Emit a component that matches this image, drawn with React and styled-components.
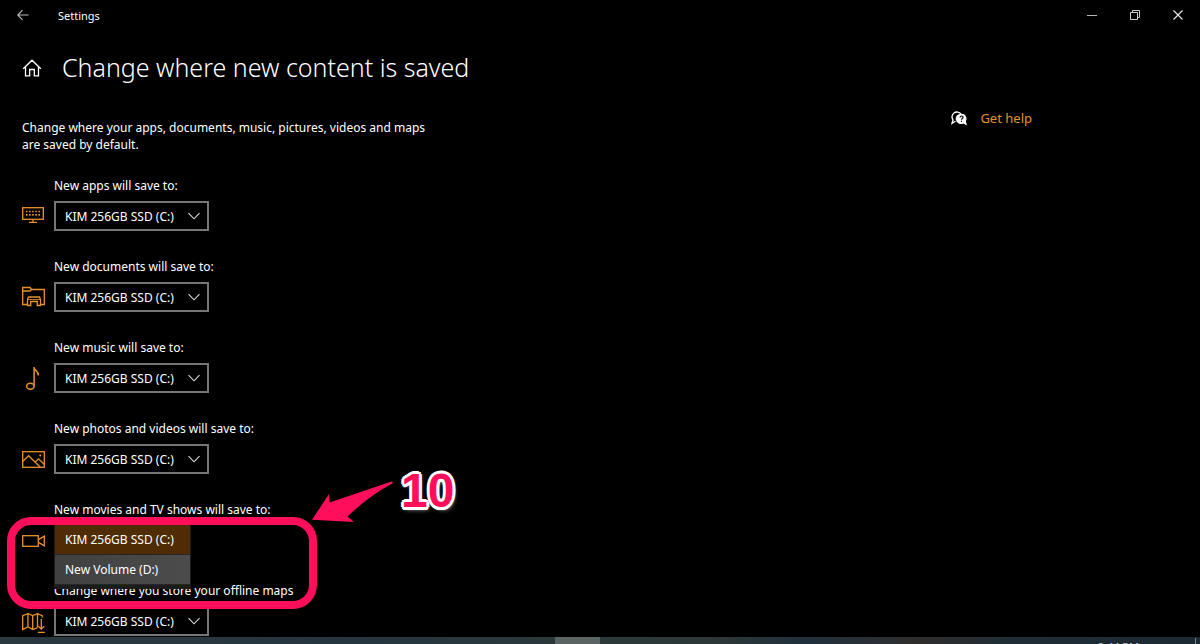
import React, { useState } from 'react';
import styled, { createGlobalStyle } from 'styled-components';

// --- DATA ---
const drives = ['KIM 256GB SSD (C:)', 'New Volume (D:)'];

const locations = [
  { id: 'apps', label: 'New apps will save to:', icon: AppsIcon },
  { id: 'documents', label: 'New documents will save to:', icon: DocumentsIcon },
  { id: 'music', label: 'New music will save to:', icon: MusicIcon },
  { id: 'photos', label: 'New photos and videos will save to:', icon: PhotosIcon },
  { id: 'movies', label: 'New movies and TV shows will save to:', icon: MoviesIcon, open: true },
  { id: 'maps', label: 'Change where you store your offline maps', icon: MapsIcon },
];

// --- STYLED COMPONENTS ---
const GlobalStyle = createGlobalStyle`
  * {
    box-sizing: border-box;
  }

  body {
    margin: 0;
    background: #000;
    color: #fff;
    font-family: 'Noto Sans', 'Open Sans', sans-serif;
    font-size: 12px;
    line-height: 17px;
  }

  button, select {
    font: inherit;
    color: inherit;
  }
`;

const Window = styled.div`
  display: flex;
  flex-direction: column;
  height: 100vh;
  overflow: hidden;
`;

const TitleBar = styled.header`
  display: flex;
  align-items: center;
  flex-shrink: 0;
  height: 30px;
  padding-right: 1px;
`;

const BarButton = styled.button`
  display: flex;
  align-items: center;
  justify-content: center;
  width: ${props => props.$width}px;
  height: 30px;
  padding: 0;
  border: none;
  background: none;
`;

const AppName = styled.span`
  flex: 1;
  padding-left: 13px;
  font-size: 11px;
`;

const Heading = styled.div`
  display: flex;
  align-items: center;
  gap: 20px;
  flex-shrink: 0;
  height: 76px;
  padding: 0 22px;
`;

const HomeButton = styled.button`
  display: flex;
  padding: 0;
  border: none;
  background: none;
`;

const Title = styled.h1`
  margin: 0;
  padding-bottom: 2px;
  font-size: 25px;
  font-weight: 300;
  line-height: 36px;
`;

const Content = styled.main`
  display: flex;
  justify-content: space-between;
  flex: 1;
  min-height: 0;
  padding: 13px 168px 0 22px;
`;

const Settings = styled.section`
  flex: 0 1 415px;
`;

const Description = styled.p`
  margin: 0 0 24px;
`;

const LocationList = styled.div`
  display: flex;
  flex-direction: column;
  gap: 27px;
`;

const Location = styled.div`
  position: relative;
  display: grid;
  grid-template-columns: 32px 1fr;
  grid-template-rows: 18px 30px;
  row-gap: 6px;
`;

const LocationLabel = styled.label`
  grid-column: 2;
`;

const IconCell = styled.span`
  display: flex;
  align-items: center;
  color: #e8922a;
`;

const SelectBox = styled.span`
  position: relative;
  width: 155px;

  svg {
    position: absolute;
    top: 10px;
    right: 9px;
    pointer-events: none;
  }
`;

const DriveSelect = styled.select`
  width: 100%;
  height: 30px;
  padding: 0 24px 0 9px;
  appearance: none;
  border: 2px solid #767676;
  border-radius: 0;
  background: #000;
  outline: none;
`;

// Open drop-down, lies over the next row
const OpenList = styled.select`
  position: absolute;
  top: 23px;
  left: 32px;
  z-index: 1;
  width: 137px;
  height: 65px;
  padding: 0;
  overflow: hidden;
  border: 1px solid #1c1c1c;
  border-bottom-width: 4px;
  border-radius: 0;
  background: #1c1c1c;
  color: #fff;
  outline: none;
  scrollbar-width: none;

  option {
    height: 30px;
    min-height: 30px;
    padding: 6px 10px;
    border-bottom: 1px solid #262626;
    background: linear-gradient(90deg, #404040, #4c4c4c);
    color: #fff;
    line-height: 17px;
  }

  option:checked {
    background: linear-gradient(#4f2c04, #4f2c04);
    color: #fff;
  }
`;

const Highlight = styled.div`
  position: absolute;
  top: 16px;
  left: -15px;
  z-index: 2;
  width: 310px;
  height: 92px;
  border: 8px solid #ff0f5b;
  border-radius: 24px;
  pointer-events: none;
`;

const Arrow = styled.svg`
  position: absolute;
  top: -23px;
  left: 288px;
  z-index: 2;
`;

const StepNumber = styled.strong`
  position: absolute;
  top: -35px;
  left: 379px;
  z-index: 2;
  color: #ff0f5b;
  font-family: 'Liberation Sans', Arial, sans-serif;
  font-size: 48px;
  line-height: 50px;
  text-shadow:
    3px 0 #fff, -3px 0 #fff, 0 3px #fff, 0 -3px #fff,
    2px 2px #fff, -2px 2px #fff, 2px -2px #fff, -2px -2px #fff,
    1px 3px #fff, -1px 3px #fff, 2px 3px 4px #888;
`;

const HelpLink = styled.a`
  display: flex;
  align-items: center;
  align-self: flex-start;
  gap: 13px;
  height: 17px;
  margin-top: -9px;
  color: #e8922a;
  font-size: 13px;
  text-decoration: none;
  white-space: nowrap;
`;

const Taskbar = styled.footer`
  display: flex;
  justify-content: space-between;
  flex-shrink: 0;
  height: 7px;
  overflow: hidden;
  background: linear-gradient(90deg, #2a3840, #263640 30%, #2c3939 52%, #2c3838 60%, #20303c 67%, #2b3034 74%, #302d2b 76%, #1f2d36 84%, #1c2a33);
`;

const ActiveTask = styled.span`
  width: 45px;
  margin-left: 555px;
  background: #5a6463;
`;

const Clock = styled.time`
  height: 17px;
  margin-top: 1px;
  margin-right: 4px;
  padding-right: 56px;
  border-right: 1px solid #7b858a;
  color: #c3c9cc;
  font-size: 11px;
`;

// --- ICONS ---
function AppsIcon() {
  return (
    <svg width="24" height="24" viewBox="0 0 24 24" fill="none" stroke="currentColor" strokeWidth="1.3">
      <rect x="0.7" y="3.7" width="20.6" height="11.6" />
      <path d="M11 15.5v2.5M7 18.3h8" />
      <path d="M4 7.5h14M4 10.9h14" strokeDasharray="1.6 1.5" strokeWidth="1.6" />
    </svg>
  );
}

function DocumentsIcon() {
  return (
    <svg width="24" height="24" viewBox="0 0 24 24" fill="none" stroke="currentColor" strokeWidth="1.3">
      <path d="M5.5 19.5H.7V2.5h7.3l1.6 2h12.7v15h-3.8" />
      <path d="M.7 6h7.2l1.7-1.5" />
      <path d="M5.5 20.5v-6l1-2.5h11l1 2.5v6h-3.2v-4H8.7v4z" />
      <path d="M6 14.5h12" strokeWidth="0.8" />
    </svg>
  );
}

function MusicIcon() {
  return (
    <svg width="24" height="26" viewBox="0 0 24 26" fill="none" stroke="currentColor" strokeWidth="1.5">
      <ellipse cx="8.4" cy="21.2" rx="3.7" ry="3" />
      <path d="M12.1 21.2V2M12.1 2.5c.4 3.2 4.3 3.4 4.3 8" />
    </svg>
  );
}

function PhotosIcon() {
  return (
    <svg width="24" height="24" viewBox="0 0 24 24" fill="none" stroke="currentColor" strokeWidth="1.3">
      <rect x="0.7" y="4.7" width="21.6" height="15.6" />
      <path d="M.9 14.2l5.7-5.5 11.7 11.5M13 15.2l3.5-3.4 5.7 5.5" />
      <circle cx="18.2" cy="8.5" r="1" fill="currentColor" stroke="none" />
    </svg>
  );
}

function MoviesIcon() {
  return (
    <svg width="24" height="24" viewBox="0 0 24 24" fill="none" stroke="currentColor" strokeWidth="1.3">
      <rect x="0.7" y="7.7" width="15.6" height="10.6" />
      <path d="M16.5 11.6l5.8-3.5v9.8l-5.8-3.5" />
    </svg>
  );
}

function MapsIcon() {
  return (
    <svg width="24" height="24" viewBox="0 0 24 24" fill="none" stroke="currentColor" strokeWidth="1.3">
      <path d="M15.3 18.8l-4.6 1.8-4.8-2.8-5.2 2.8V6.6l5.2-2 4.8 2 4.8-2 4.7 2v2" />
      <path d="M5.9 4.6v13.2M10.7 6.6v14M15.5 4.6v14" />
      <path d="M19.3 10v10M16.3 17.2l3 3 3-3M15.8 23.3h7" />
    </svg>
  );
}

function Chevron() {
  return (
    <svg width="12" height="10" viewBox="0 0 12 10" fill="none" stroke="#ddd" strokeWidth="1.1">
      <path d="M.5 2.2L6 7.8l5.5-5.6" />
    </svg>
  );
}

function HelpIcon() {
  return (
    <svg width="16" height="16" viewBox="0 0 16 16">
      <path d="M4.5 10.2L1 12.3l1-3.3A4.800 4.800 0 1 1 10 3" fill="none" stroke="#fff" strokeWidth="1.3" />
      <path d="M10.5 2.7a5 5 0 0 1 4.4 7.4l1 4.4-3.6-2A5.200 5.200 0 1 1 10.500 2.700z" fill="#fff" />
      <path d="M9 6.5c0-2.1 3.300-2 3.100-.1-.1 1.100-1.600 1.200-1.600 2.400M10.500 9.800v1.200" fill="none" stroke="#000" strokeWidth="1.1" />
    </svg>
  );
}

// --- ROWS ---
function LocationRow({ item }) {
  const [drive, setDrive] = useState(drives[0]);
  const Icon = item.icon;

  const field = {
    id: item.id,
    value: drive,
    onChange: (e) => setDrive(e.target.value),
  };
  const options = drives.map((name) => <option key={name}>{name}</option>);

  return (
    <Location>
      <LocationLabel htmlFor={item.id}>{item.label}</LocationLabel>
      <IconCell><Icon /></IconCell>
      {item.open ? (
        <>
          <OpenList size={2} {...field}>{options}</OpenList>
          <Highlight />
          <Arrow width="84" height="46" viewBox="0 0 84 46" fill="#ff0f5b">
            <path d="M81.5 3.5c1.500 0 1.500 1.500.3 2.200Q60 17 37.500 38.500l6.300 5.500L2 41.800 19 16l.5 8.500z" />
          </Arrow>
          <StepNumber>10</StepNumber>
        </>
      ) : (
        <SelectBox>
          <DriveSelect {...field}>{options}</DriveSelect>
          <Chevron />
        </SelectBox>
      )}
    </Location>
  );
}

export default function App() {
  return (
    <Window>
      <GlobalStyle />
      <TitleBar>
        <BarButton $width={45} aria-label="Back">
          <svg width="12" height="12" viewBox="0 0 12 12" fill="none" stroke="#bbb" strokeWidth="1.1">
            <path d="M11.5 6H1M5.5 1.2L.8 6l4.7 4.8" />
          </svg>
        </BarButton>
        <AppName>Settings</AppName>
        <BarButton $width={43} aria-label="Minimize">
          <svg width="10" height="10" viewBox="0 0 10 10" stroke="#bbb">
            <path d="M0 5.5h10" />
          </svg>
        </BarButton>
        <BarButton $width={43} aria-label="Restore">
          <svg width="10" height="10" viewBox="0 0 10 10" fill="none" stroke="#ccc">
            <path d="M.5 2.5h7v7h-7zM2.5 2.5v-2h7v7h-2" />
          </svg>
        </BarButton>
        <BarButton $width={43} aria-label="Close">
          <svg width="10" height="10" viewBox="0 0 10 10" stroke="#eee" strokeWidth="1.1">
            <path d="M.5.5l9 9M9.5.5l-9 9" />
          </svg>
        </BarButton>
      </TitleBar>

      <Heading>
        <HomeButton aria-label="Home">
          <svg width="20" height="18" viewBox="0 0 20 18" fill="none" stroke="#fff" strokeWidth="1.3">
            <path d="M1.2 9.7L10 1.2l8.8 8.5M3.5 8v8.8h4.2v-6.3h4.6v6.3h4.2V8" />
          </svg>
        </HomeButton>
        <Title>Change where new content is saved</Title>
      </Heading>

      <Content>
        <Settings>
          <Description>
            Change where your apps, documents, music, pictures, videos and maps are saved by default.
          </Description>
          <LocationList>
            {locations.map((item) => (
              <LocationRow key={item.id} item={item} />
            ))}
          </LocationList>
        </Settings>
        <HelpLink href="#help">
          <HelpIcon />
          Get help
        </HelpLink>
      </Content>

      <Taskbar>
        <ActiveTask />
        <Clock>2:44 PM</Clock>
      </Taskbar>
    </Window>
  );
}
